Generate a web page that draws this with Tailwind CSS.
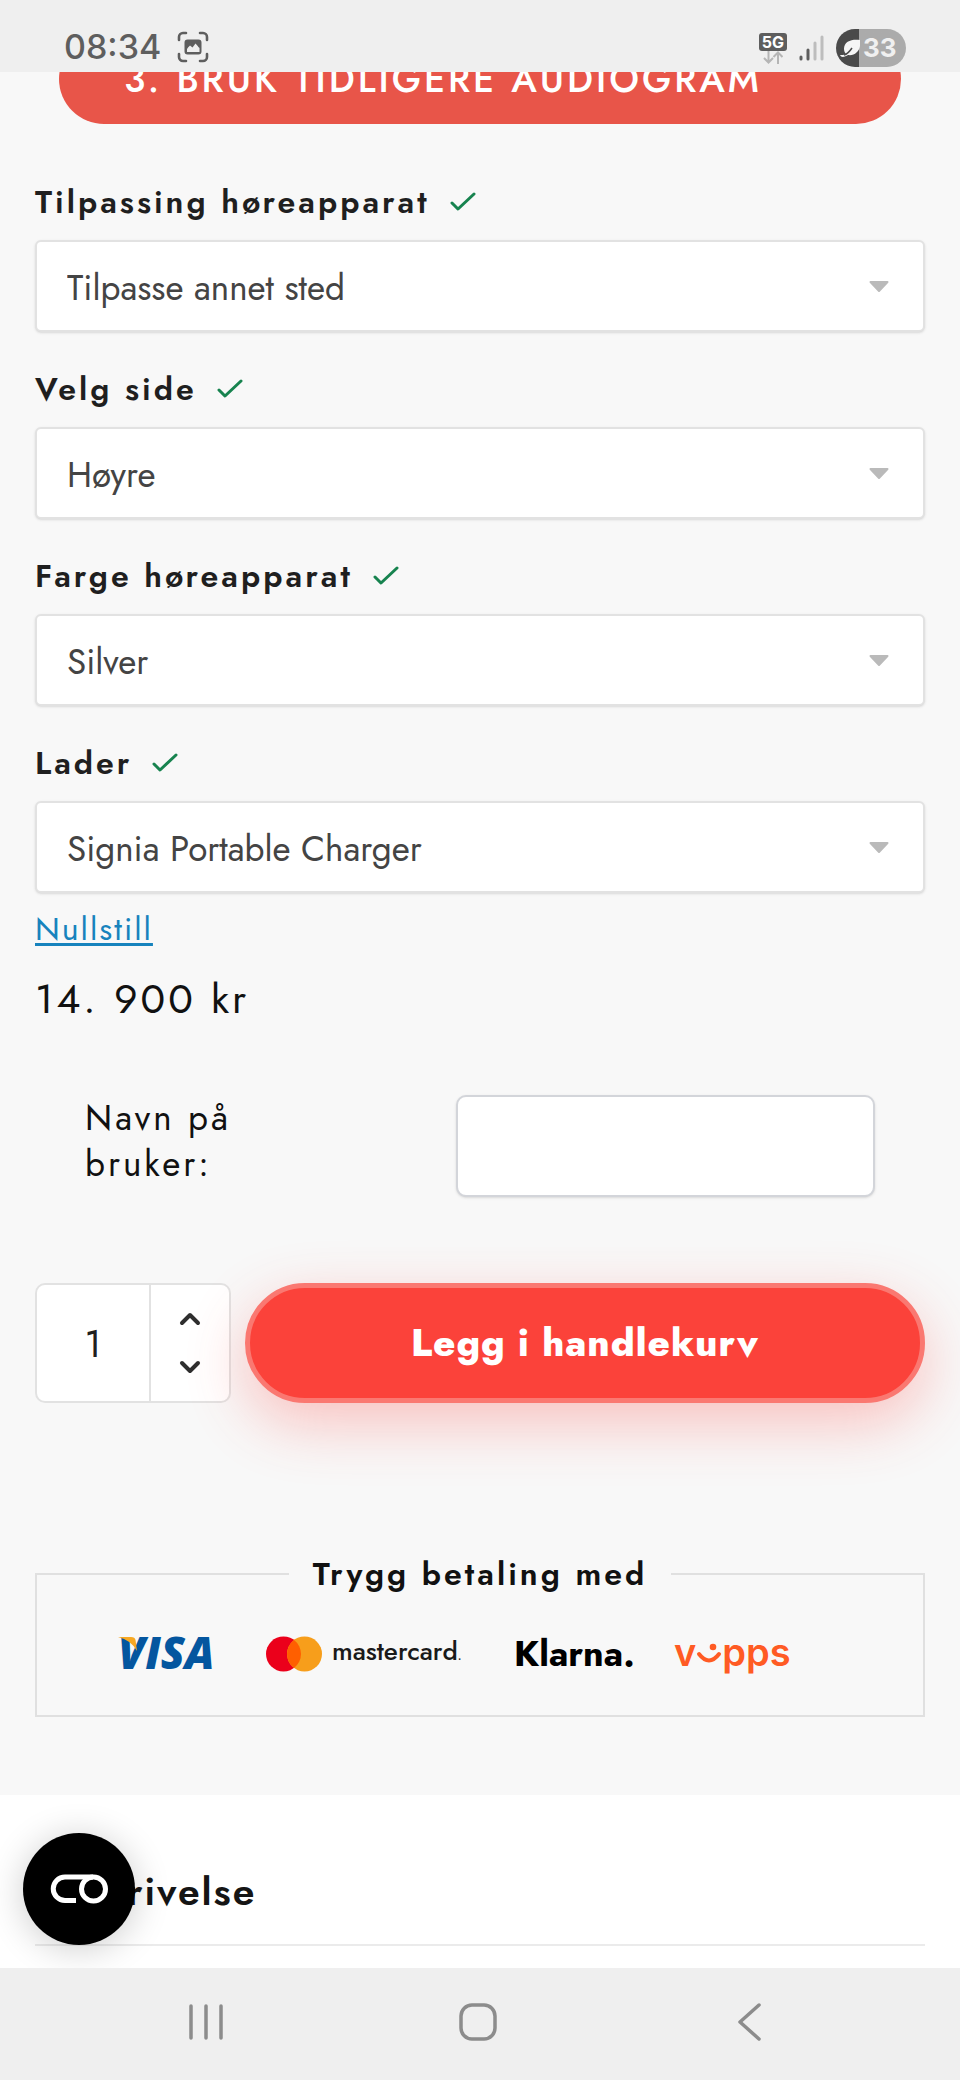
<!DOCTYPE html>
<html lang="no">
<head>
<meta charset="utf-8">
<meta name="viewport" content="width=device-width, initial-scale=1">
<title>Høreapparat</title>
<script src="https://cdn.jsdelivr.net/npm/@tailwindcss/browser@4"></script>
</head>
<body class="flex min-h-screen flex-col bg-[#f8f8f8] font-[Jost,Lato,sans-serif] text-[#1f1f1f]">
  <svg class="hidden">
    <symbol id="check" viewBox="0 0 26 20"><path d="M2 11l6 6L24 2" fill="none" stroke="#17834f" stroke-width="3" stroke-linecap="round" stroke-linejoin="round"/></symbol>
    <symbol id="caret" viewBox="0 0 20 12"><path d="M1.500 1h17L10 10z" fill="#bababa" stroke="#bababa" stroke-width="2" stroke-linejoin="round"/></symbol>
  </svg>

  <header class="z-10 flex h-[72px] items-end justify-between bg-[#efefef] pr-[54px] pb-[5px] pl-16 font-[Inter,sans-serif]">
    <div class="flex items-center gap-4">
      <span class="text-[34px] leading-10 font-medium text-[#5e5e5e]">08:34</span>
      <svg class="size-8" viewBox="0 0 32 32" fill="none" stroke="#5e5e5e" stroke-width="2.600" stroke-linecap="round">
        <path d="M2 9V6a4 4 0 0 1 4-4h3M23 2h3a4 4 0 0 1 4 4v3M30 23v3a4 4 0 0 1-4 4h-3M9 30H6a4 4 0 0 1-4-4v-3"/>
        <rect x="9" y="10" width="14" height="12" rx="1.500" stroke-width="3"/>
        <path d="M10 21v-3l3-3 2.500 2 3-4 4 4v4z" fill="#efefef" stroke="none"/>
        <path d="M9 11h14v3.500l-1 2-3.500-4-3 4-2.500-2-3 3H9z" fill="#5e5e5e" stroke="none"/>
      </svg>
    </div>
    <div class="flex items-center gap-3">
      <div class="flex flex-col items-center">
        <span class="rounded-[3px] bg-[#5e5e5e] px-[3px] text-[16px] leading-[18px] font-bold text-white">5G</span>
        <svg class="h-[13px] w-5" viewBox="0 0 20 13" fill="none" stroke="#b5b5b5" stroke-width="2"><path d="M5.500 0v11M1 7l4.500 4.500L10 7M15 13V2M10.500 6L15 1.500 19.500 6"/></svg>
      </div>
      <svg class="h-7 w-[25px]" viewBox="0 0 25 28" stroke-width="3" stroke-linecap="round"><path d="M2 23v2M9 16v9" stroke="#5e5e5e"/><path d="M16 9v16M23 3v22" stroke="#bdbdbd"/></svg>
      <div class="flex h-[38px] w-[70px] items-center rounded-full bg-linear-to-r from-[#4a4a4a] from-33% to-[#ababab] to-33%">
        <svg class="ml-1 h-[22px] w-5" viewBox="0 0 20 22"><path d="M20 3C12 2 4 4 4 12c0 2 1 4 2 5-2 1-4 1-6 1 1 3 5 2 8 0 6 1 11-3 12-9z" fill="#f5f5f5"/><path d="M4 18c4-1 6-4 8-7" fill="none" stroke="#4a4a4a" stroke-width="1.500"/></svg>
        <span class="ml-[3px] text-[26px] leading-8 font-bold text-[#f0f0f0]">33</span>
      </div>
    </div>
  </header>

  <main class="flex-1">
    <section class="px-[35px] pb-[78px]">
      <div class="flex h-[52px] items-end overflow-hidden px-6">
        <button type="button" class="flex h-[90px] w-full shrink-0 items-center justify-center rounded-full bg-[#e85549] pr-[74px] text-[37px] leading-10 font-medium tracking-[3px] whitespace-nowrap text-white">3. BRUK TIDLIGERE AUDIOGRAM</button>
      </div>

      <form>
        <div class="mt-14 flex flex-col gap-[35px]">
          <div>
            <div class="mb-4 flex items-center gap-5">
              <label for="fit" class="text-[32px] leading-[44px] font-semibold tracking-[3px]">Tilpassing høreapparat</label>
              <svg class="h-5 w-[26px]"><use href="#check"/></svg>
            </div>
            <div class="relative">
              <select id="fit" class="block h-[92px] w-full appearance-none rounded-md border-2 border-[#e2e2e2] bg-white px-[30px] pt-1 text-[35px] text-[#444] shadow-sm"><option>Tilpasse annet sted</option></select>
              <svg class="pointer-events-none absolute top-[41px] right-9 h-3 w-5"><use href="#caret"/></svg>
            </div>
          </div>
          <div>
            <div class="mb-4 flex items-center gap-5">
              <label for="side" class="text-[32px] leading-[44px] font-semibold tracking-[3px]">Velg side</label>
              <svg class="h-5 w-[26px]"><use href="#check"/></svg>
            </div>
            <div class="relative">
              <select id="side" class="block h-[92px] w-full appearance-none rounded-md border-2 border-[#e2e2e2] bg-white px-[30px] pt-1 text-[35px] text-[#444] shadow-sm"><option>Høyre</option></select>
              <svg class="pointer-events-none absolute top-[41px] right-9 h-3 w-5"><use href="#caret"/></svg>
            </div>
          </div>
          <div>
            <div class="mb-4 flex items-center gap-5">
              <label for="color" class="text-[32px] leading-[44px] font-semibold tracking-[3px]">Farge høreapparat</label>
              <svg class="h-5 w-[26px]"><use href="#check"/></svg>
            </div>
            <div class="relative">
              <select id="color" class="block h-[92px] w-full appearance-none rounded-md border-2 border-[#e2e2e2] bg-white px-[30px] pt-1 text-[35px] text-[#444] shadow-sm"><option>Silver</option></select>
              <svg class="pointer-events-none absolute top-[41px] right-9 h-3 w-5"><use href="#caret"/></svg>
            </div>
          </div>
          <div>
            <div class="mb-4 flex items-center gap-5">
              <label for="charger" class="text-[32px] leading-[44px] font-semibold tracking-[3px]">Lader</label>
              <svg class="h-5 w-[26px]"><use href="#check"/></svg>
            </div>
            <div class="relative">
              <select id="charger" class="block h-[92px] w-full appearance-none rounded-md border-2 border-[#e2e2e2] bg-white px-[30px] pt-1 text-[35px] text-[#444] shadow-sm"><option>Signia Portable Charger</option></select>
              <svg class="pointer-events-none absolute top-[41px] right-9 h-3 w-5"><use href="#caret"/></svg>
            </div>
          </div>
        </div>

        <a href="#" class="mt-4 block w-fit text-[32px] leading-10 tracking-[2px] text-[#1783bd] underline decoration-3 underline-offset-3">Nullstill</a>
        <p class="mt-[26px] text-[41px] leading-[48px] tracking-[3px] text-[#111]">14. 900 kr</p>

        <div class="mt-[72px] flex items-start justify-between px-[50px]">
          <label for="name" class="w-1/4 text-[35px] leading-[46px] tracking-[3px] text-[#111]">Navn på bruker:</label>
          <input id="name" type="text" class="h-[102px] w-[53%] rounded-[10px] border-2 border-[#d3d5da] bg-white px-6 text-[35px] shadow-sm">
        </div>

        <div class="mt-[86px] flex gap-[14px]">
          <div class="flex h-[120px] w-[196px] rounded-[10px] border-2 border-[#e2e2e2] bg-white">
            <input type="text" inputmode="numeric" value="1" aria-label="Antall" class="w-[112px] text-center text-[38px]">
            <div class="flex flex-1 flex-col items-center justify-center gap-6 border-l-2 border-[#e2e2e2]">
              <button type="button" aria-label="Øk antall" class="p-1"><svg class="h-4 w-[22px]" viewBox="0 0 22 16"><path d="M3 12l8-8 8 8" fill="none" stroke="#2e2e2e" stroke-width="4" stroke-linecap="round" stroke-linejoin="round"/></svg></button>
              <button type="button" aria-label="Reduser antall" class="p-1"><svg class="h-4 w-[22px]" viewBox="0 0 22 16"><path d="M3 4l8 8 8-8" fill="none" stroke="#2e2e2e" stroke-width="4" stroke-linecap="round" stroke-linejoin="round"/></svg></button>
            </div>
          </div>
          <button type="submit" class="h-[120px] flex-1 rounded-full border-5 border-[#fa7871] bg-[#fb423a] pb-[2px] text-[38px] font-extrabold tracking-[1px] text-white shadow-[0_20px_60px_rgba(251,66,58,0.3)]">Legg i handlekurv</button>
        </div>
      </form>

      <fieldset class="mt-[151px] border-2 border-[#e0e0e0]">
        <legend class="mx-auto px-6 text-[32px] leading-10 font-semibold tracking-[3px] text-[#111]">Trygg betaling med</legend>
        <div class="flex h-[121px] items-center pb-[2px] pl-[81px]">
          <div class="relative w-[100px] pb-1 font-['Open_Sans',sans-serif] text-[44px] leading-10 font-extrabold text-[#04569f] italic" aria-label="Visa">VISA
            <svg class="absolute top-1 left-0 h-5 w-5" viewBox="0 0 20 20"><path d="M0 1H13Q17 1 17.500 4L19 15Q13 4 0 1z" fill="#f7a823"/></svg>
          </div>
          <svg class="ml-12 h-9 w-14" viewBox="0 0 56 36"><circle cx="17.500" cy="18" r="17.500" fill="#eb001b"/><circle cx="38.500" cy="18" r="17.500" fill="#f79e1b"/><path d="M28 4a17.500 17.500 0 0 1 0 28a17.500 17.500 0 0 1 0-28z" fill="#ff5f00"/></svg>
          <span class="ml-[10px] w-[130px] text-[26px] leading-8 font-medium text-[#1a1a1a]">mastercard<span class="text-[12px]">.</span></span>
          <span class="ml-[52px] w-[118px] pb-[2px] text-[36px] leading-10 font-bold text-black">Klarna.</span>
          <span class="ml-[42px] flex items-center pb-1 font-[Inter,sans-serif] text-[38px] leading-10 font-semibold text-[#ff5b24]"><span>v</span><svg class="h-6 w-[26px]" viewBox="0 0 26 24"><circle cx="17" cy="7" r="3.300" fill="#ff5b24"/><path d="M3 14q10 13 20 0" fill="none" stroke="#ff5b24" stroke-width="4" stroke-linecap="round"/></svg><span>pps</span></span>
        </div>
      </fieldset>
    </section>

    <section class="relative bg-white px-[35px] pt-[73px] pb-[22px]">
      <h2 class="border-b-2 border-[#ebebeb] pb-7 text-[39px] leading-[48px] font-semibold tracking-[2px] text-[#151515]">Beskrivelse</h2>
      <button type="button" aria-label="Informasjonskapsler" class="absolute top-[38px] left-[23px] flex size-28 items-center justify-center rounded-full bg-black shadow-[0_4px_36px_rgba(0,0,0,0.2)]">
        <svg class="h-[30px] w-[58px]" viewBox="0 0 58 30" fill="none" stroke="#fff" stroke-width="5"><path d="M26 26.500H15a11.500 11.500 0 0 1 0-23.500h28"/><circle cx="43.500" cy="15" r="12"/></svg>
      </button>
    </section>
  </main>

  <nav class="z-10 grid h-28 grid-cols-3 items-center justify-items-center bg-[#efefef] pr-[74px] pb-1 pl-[70px]">
    <button type="button" aria-label="Nylige apper"><svg class="h-9 w-9" viewBox="0 0 36 36" stroke="#8c8c8c" stroke-width="3.500" stroke-linecap="round"><path d="M3 2v32M18 2v32M33 2v32"/></svg></button>
    <button type="button" aria-label="Hjem"><svg class="size-10" viewBox="0 0 40 40"><rect x="3" y="3" width="34" height="34" rx="11" fill="none" stroke="#8c8c8c" stroke-width="3.500"/></svg></button>
    <button type="button" aria-label="Tilbake"><svg class="h-10 w-6" viewBox="0 0 24 40" fill="none" stroke="#8c8c8c" stroke-width="3.500" stroke-linecap="round" stroke-linejoin="round"><path d="M21 3L2 20l19 17"/></svg></button>
  </nav>
</body>
</html>
